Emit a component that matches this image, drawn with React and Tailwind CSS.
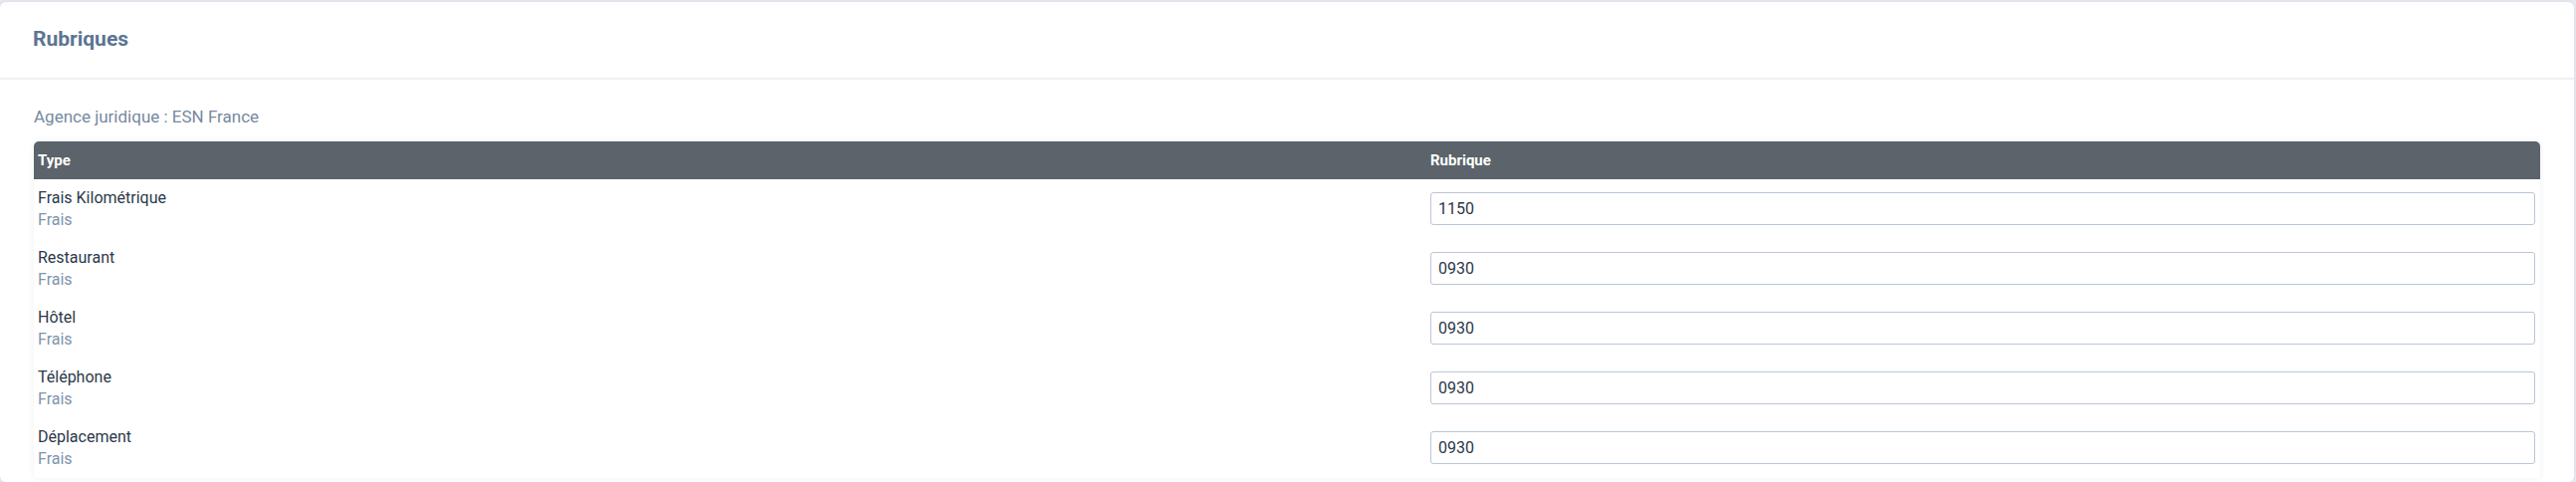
const rows = [
  { label: 'Frais Kilométrique', type: 'Frais', value: '1150' },
  { label: 'Restaurant', type: 'Frais', value: '0930' },
  { label: 'Hôtel', type: 'Frais', value: '0930' },
  { label: 'Téléphone', type: 'Frais', value: '0930' },
  { label: 'Déplacement', type: 'Frais', value: '0930' },
];

const App = () => {
  return (
    <div className="min-h-[484px] bg-[#e6eaf0] pt-[2px] pr-[2px] font-['Roboto',sans-serif]">
      <div className="bg-white rounded-md min-h-[482px] shadow-[0_0_4px_rgba(0,0,0,0.06)]">
        <div className="h-[78px] border-b-2 border-[#eef0f5] px-[33px] flex items-center">
          <h1 className="text-[21px] font-bold text-[#5b7592] leading-none pb-[2px]">Rubriques</h1>
        </div>

        <div className="px-[34px] pt-[26px]">
          <p className="text-[17px] text-[#7789a1] leading-[22px] mb-[14px]">Agence juridique : ESN France</p>

          <div className="shadow-[0_0_6px_rgba(0,0,0,0.07)] rounded-t-[5px]">
            <table className="w-full border-collapse">
              <thead>
                <tr className="bg-[#5c636a] text-white">
                  <th className="h-[38px] text-left text-[15px] font-bold pl-[4px] w-[1399px] rounded-tl-[5px]">Type</th>
                  <th className="h-[38px] text-left text-[15px] font-bold pl-[4px] rounded-tr-[5px]">Rubrique</th>
                </tr>
              </thead>
              <tbody>
                {rows.map((row) => (
                  <tr key={row.label} className="h-[60px]">
                    <td className="pl-[4px] align-middle">
                      <div className="text-[16px] leading-[22px] text-[#2b384a]">{row.label}</div>
                      <div className="text-[16px] leading-[22px] text-[#7f93ac]">{row.type}</div>
                    </td>
                    <td className="pl-[4px] pr-[5px] align-middle">
                      <input
                        type="text"
                        defaultValue={row.value}
                        className="block w-full h-[33px] mb-[2px] border-[1.5px] border-[#bac6d5] rounded-[3px] px-[7px] text-[16px] text-[#2b384a] outline-none"
                      />
                    </td>
                  </tr>
                ))}
              </tbody>
            </table>
          </div>
        </div>
      </div>
    </div>
  );
};

export default App;
